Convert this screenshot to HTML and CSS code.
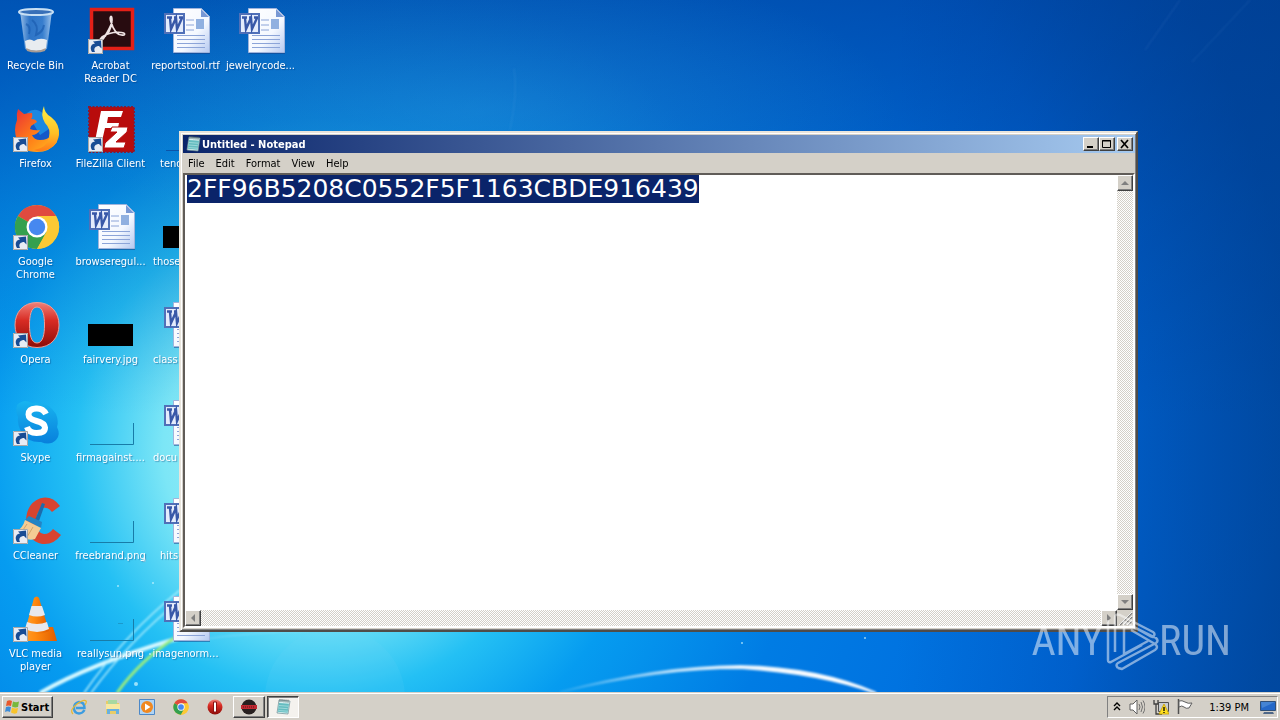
FILE: index.html
```html
<!DOCTYPE html>
<html lang="en">
<head>
<meta charset="utf-8">
<title>Desktop</title>
<link rel="stylesheet" href="styles.css">
</head>
<body>
<svg class="defs" aria-hidden="true">
  <defs>
    <linearGradient id="page" x1="0" y1="0" x2="1" y2="1"><stop offset="0" stop-color="#fff"/><stop offset=".6" stop-color="#f4f8ff"/><stop offset="1" stop-color="#b4c8f0"/></linearGradient>
    <linearGradient id="red" x1="0" y1="0" x2="0" y2="1"><stop offset="0" stop-color="#f08078"/><stop offset=".4" stop-color="#d82c24"/><stop offset="1" stop-color="#8c0c08"/></linearGradient>
    <linearGradient id="fox" x1="0" y1="0" x2="1" y2="1"><stop offset="0" stop-color="#e83038"/><stop offset=".5" stop-color="#ff7a18"/><stop offset="1" stop-color="#ffc020"/></linearGradient>
    <linearGradient id="foxtail" x1="0" y1="0" x2="0" y2="1"><stop offset="0" stop-color="#fff048"/><stop offset=".6" stop-color="#ffc024"/><stop offset="1" stop-color="#ff7a1a"/></linearGradient>
    <linearGradient id="bin" x1="0" y1="0" x2="1" y2="0"><stop offset="0" stop-color="#c4dcf4" stop-opacity=".8"/><stop offset=".3" stop-color="#4c88d0" stop-opacity=".6"/><stop offset=".7" stop-color="#5c98dc" stop-opacity=".6"/><stop offset="1" stop-color="#c8e0f8" stop-opacity=".8"/></linearGradient>
    <linearGradient id="sky" x1="0" y1="0" x2="0" y2="1"><stop offset="0" stop-color="#18b4f0"/><stop offset="1" stop-color="#0880dc"/></linearGradient>
    <linearGradient id="cone" x1="0" y1="0" x2="1" y2="0"><stop offset="0" stop-color="#ffa030"/><stop offset=".4" stop-color="#ff8a10"/><stop offset="1" stop-color="#e05c00"/></linearGradient>
    <symbol id="arrow" viewBox="0 0 15 15"><path d="M0 0h15v15H0z" fill="#e8ecf4"/><path d="M.5.5h14v14H.5z" fill="none" stroke="#a8a8a8"/><path d="M4 13C1 8 4 4.500 7 4.500L5 2.500l8-1 .5 8-2.500-2.500C8 7 5 9 7 13z" fill="#184c94"/></symbol>
    <symbol id="word" viewBox="0 0 48 48"><path d="M12 4h29l8 8v36H12z" fill="#183c80" opacity=".5"/><path d="M11.500 2.500h28l8 8v36h-36z" fill="url(#page)" stroke="#a0b4dc"/><path d="M39 3v8h8z" fill="#7898d4"/><path d="M24 14h8M24 19h8M24 24h8M15 29.500h28M15 33.500h28M15 37.500h28M15 41.500h28" stroke="#8ca4d8"/><path d="M34 13h8v10h-8z" fill="#90b0e0"/><path d="M3 8h19v19H3z" fill="#e4ecfc" stroke="#5070b8" stroke-width="2"/><path d="M5 11.500h5M12 11.500h3M17 11.500h4M8 12l1 11 5-11 1 11 5-11" fill="none" stroke="#3858a8" stroke-width="2.400"/></symbol>
    <symbol id="blank" viewBox="0 0 48 48"><path d="M3 46.500h43.500V25" fill="none" stroke="#187ca8" stroke-width="1"/></symbol>
    <symbol id="black" viewBox="0 0 48 48"><path d="M1 24h45v22H1z"/></symbol>
    <symbol id="chrome" viewBox="0 0 48 48"><circle cx="25" cy="25" r="22" fill="#fcc934"/><path d="M25 25L5.900 14A22 22 0 0 1 44.100 14z" fill="#e04a3f"/><path d="M25 25L5.900 14A22 22 0 0 0 25 47l9.500-17z" fill="#34a04f"/><path d="M25 14h19.100A22 22 0 0 1 25 47l9.500-17z" fill="#fcc934"/><circle cx="25" cy="25" r="10.500" fill="#fff"/><circle cx="25" cy="25" r="8.200" fill="#4688f0"/></symbol>
    <symbol id="opera" viewBox="0 0 48 48"><path fill-rule="evenodd" d="M25 2.500c14 0 22 10 22 22.500S39 47.500 25 47.500 3 37.500 3 25 11 2.500 25 2.500zM25 7c-6 0-7.500 9-7.500 18S19 43 25 43s7.500-9 7.500-18S31 7 25 7z" fill="url(#red)" stroke="#f09c94" stroke-width="1"/></symbol>
    <symbol id="notepad" viewBox="0 0 16 16"><path d="M4 1l11 1-2 13-11-1z" fill="#d8f0f0" stroke="#6c8c94" stroke-width=".7"/><path d="M4 4l10 .7-1.500 9-9.700-.9z" fill="#64bcc0"/><path d="M4 6.500l9 .7M3.700 9l9 .7M3.400 11.500l9 .7" stroke="#b4e4e4" stroke-width=".7"/><path d="M5 0v3M7 0v3M9 .3v3M11 .5v3M13 .7v3" stroke="#546468" stroke-width=".8"/></symbol>
  </defs>
</svg>

<main class="desktop">
  <svg class="wallpaper" viewBox="0 0 1280 692" preserveAspectRatio="none" aria-hidden="true">
    <defs>
      <radialGradient id="glow" gradientUnits="userSpaceOnUse" cx="320" cy="450" r="980"><stop offset="0" stop-color="#c0f8fc"/><stop offset=".16" stop-color="#7ce6f6"/><stop offset=".25" stop-color="#24c0f4"/><stop offset=".34" stop-color="#069cf0"/><stop offset=".5" stop-color="#007ce4"/><stop offset=".8" stop-color="#0068dc"/><stop offset="1" stop-color="#0052b4"/></radialGradient>
      <linearGradient id="shade" x1="0" y1="0" x2="0" y2="1"><stop offset="0" stop-color="#00409c" stop-opacity=".65"/><stop offset=".3" stop-color="#00409c" stop-opacity=".25"/><stop offset=".6" stop-color="#00409c" stop-opacity="0"/></linearGradient>
      <linearGradient id="edge" x1="0" y1="0" x2="1" y2="0"><stop offset=".7" stop-color="#003880" stop-opacity="0"/><stop offset="1" stop-color="#003880" stop-opacity=".4"/></linearGradient>
      <radialGradient id="haze"><stop offset="0" stop-color="#40b0f0" stop-opacity=".25"/><stop offset="1" stop-color="#40b0f0" stop-opacity="0"/></radialGradient>
      <linearGradient id="beam" x1="0" y1="0" x2="1" y2="0"><stop offset="0" stop-color="#fff" stop-opacity=".1"/><stop offset=".65" stop-color="#fff" stop-opacity=".9"/><stop offset="1" stop-color="#fff"/></linearGradient>
      <filter id="soft" x="-10%" y="-10%" width="120%" height="120%"><feGaussianBlur stdDeviation="1"/></filter>
    </defs>
    <path d="M0 0h1280v692H0z" fill="url(#glow)"/>
    <path d="M0 0h1280v692H0z" fill="url(#shade)"/>
    <path d="M0 0h1280v692H0z" fill="url(#edge)"/>
    <ellipse cx="480" cy="110" rx="420" ry="150" fill="url(#haze)"/>
    <circle cx="335" cy="698" r="70" fill="#70d4f8" opacity=".12"/>
    <g fill="none" filter="url(#soft)">
      <path d="M40 693Q90 664 179 638" stroke="#d4f8ff" stroke-width="4"/>
      <path d="M84 693Q124 635 180 590M91 693Q130 640 180 600" stroke="#b4f0fc" stroke-width="1.500"/>
      <path d="M117 693Q140 660 179 635" stroke="#98ec80" stroke-width="3"/>
      <path d="M198 640Q250 632 310 631" stroke="#b4ecfc" opacity=".4"/>
      <path d="M560 692Q660 666 740 666Q820 668 876 693Q820 673 740 668Q660 668 560 692z" fill="url(#beam)" stroke="url(#beam)" stroke-width="2"/>
      <path d="M1192 62L1250 0M1145 50L1180 0" stroke="#68a8e0" opacity=".2"/>
      <path d="M514 68Q518 92 510 130" stroke="#68b4ec" opacity=".2"/>
    </g>
    <g fill="#d4f8ff" opacity=".7"><circle cx="118" cy="586" r="1"/><circle cx="144" cy="560" r="2"/><circle cx="153" cy="583" r="1"/><circle cx="136" cy="684" r="2"/><circle cx="865" cy="638" r="1"/><circle cx="742" cy="643" r="1"/><circle cx="150" cy="654" r="1"/></g>
  </svg>

  <div class="icons">
    <a class="item" href="#"><svg class="pic" viewBox="0 0 48 48"><path d="M8 5l5 38q10 5 22 0l5-38z" fill="url(#bin)"/><path d="M13 35q5-3 9 0 6-4 13-1l-1 9q-9 4-20 0z" fill="#e8ecf0"/><path d="M14 42q10 5 20 0l-1 3q-9 3-18 0z" fill="#a89c94"/><ellipse cx="24" cy="6" rx="17" ry="3" fill="#3870b8" stroke="#c8e0f4" stroke-width="2"/><path d="M14 18q5 2 3 10M20 14q7 5 4 15 7-3 8-10" fill="none" stroke="#1858ac" stroke-width="2" opacity=".6"/></svg><span class="name">Recycle Bin</span></a>
    <a class="item" href="#"><svg class="pic" viewBox="0 0 48 48"><path d="M4.500 3.500h41v39h-41z" fill="#280c10" stroke="#e42018" stroke-width="3.500"/><path d="M13 34q12-7 12-20c0-6-3-4-1 2 3 10 8 14 13 13 4-3-12-5-22 2-5 5-1 6 3-1q5-8 7-14" fill="none" stroke="#f0e4e4" stroke-width="1.700"/><use href="#arrow" x="1" y="33" width="15" height="15"/></svg><span class="name">Acrobat Reader DC</span></a>
    <a class="item" href="#"><svg class="pic" viewBox="0 0 48 48"><use href="#word"/></svg><span class="name">reportstool.rtf</span></a>
    <a class="item" href="#"><svg class="pic" viewBox="0 0 48 48"><use href="#word"/></svg><span class="name">jewelrycode...</span></a>

    <a class="item" href="#"><svg class="pic" viewBox="0 0 48 48"><circle cx="25" cy="23" r="17" fill="#1458c8"/><path d="M15 9q8-7 17 1 2 8 5 15l-9 6z" fill="#1c88e0"/><path d="M6 5l6 5q4-1 8-1 1 4-1 6 5 0 6 3l-6 4-1 3q5 2 10 1-3 5-8 5 2 5 8 5 8 0 12-5 5 2 5 7-7 10-20 10Q9 48 5 36 1 26 5 16 4 10 6 5z" fill="url(#fox)"/><path d="M32 2q0 7 7 11 9 7 8 18-2 13-16 16-5 1-9-1 13-2 15-13 2-8-4-14-5-8-1-17z" fill="url(#foxtail)"/><use href="#arrow" x="1" y="33" width="15" height="15"/></svg><span class="name">Firefox</span></a>
    <a class="item" href="#"><svg class="pic" viewBox="0 0 48 48"><path d="M2 3h45v45H2z" fill="#b80c0c" stroke="#8c1830" stroke-width="2" stroke-dasharray="2 1.500"/><path d="M14 7h22l-2 6H21l-1 6h12l-1 5H18l-3 13H8z" fill="#fff"/><path d="M25 23h16l-1 5-11 10h10l-2 6H17l1-5 12-11h-7z" fill="#fff" stroke="#b80c0c" stroke-width="1"/><use href="#arrow" x="1" y="33" width="15" height="15"/></svg><span class="name">FileZilla Client</span></a>
    <a class="item" href="#"><svg class="pic" viewBox="0 0 48 48"><path d="M4 46.500h42" stroke="#0c54a8"/></svg><span class="name cut">tend</span></a>
    <span></span>

    <a class="item" href="#"><svg class="pic" viewBox="0 0 48 48"><use href="#chrome"/><use href="#arrow" x="1" y="33" width="15" height="15"/></svg><span class="name">Google Chrome</span></a>
    <a class="item" href="#"><svg class="pic" viewBox="0 0 48 48"><use href="#word"/></svg><span class="name">browseregul...</span></a>
    <a class="item" href="#"><svg class="pic" viewBox="0 0 48 48"><use href="#black"/></svg><span class="name cut wide">those</span></a>
    <span></span>

    <a class="item" href="#"><svg class="pic" viewBox="0 0 48 48"><use href="#opera"/><use href="#arrow" x="1" y="33" width="15" height="15"/></svg><span class="name">Opera</span></a>
    <a class="item" href="#"><svg class="pic" viewBox="0 0 48 48"><use href="#black"/></svg><span class="name">fairvery.jpg</span></a>
    <a class="item" href="#"><svg class="pic" viewBox="0 0 48 48"><use href="#word"/></svg><span class="name cut wide">class</span></a>
    <span></span>

    <a class="item" href="#"><svg class="pic" viewBox="0 0 48 48"><path d="M5 7Q12 0 20 5q16-2 24 11 3 8 1 13 4 8-1 13-6 6-15 2-12 1-19-9-5-8-4-16-3-6-1-12z" fill="url(#sky)"/><path d="M34 16q-3-6-10-5.500-7.500.5-7.500 6 0 4.500 8 6.500t8.500 6.500q0 5.500-8.500 5.500-7.500 0-9.500-6" fill="none" stroke="#fff" stroke-width="6"/><use href="#arrow" x="1" y="33" width="15" height="15"/></svg><span class="name">Skype</span></a>
    <a class="item" href="#"><svg class="pic" viewBox="0 0 48 48"><use href="#blank"/></svg><span class="name">firmagainst....</span></a>
    <a class="item" href="#"><svg class="pic" viewBox="0 0 48 48"><use href="#word"/></svg><span class="name cut wide">docu</span></a>
    <span></span>

    <a class="item" href="#"><svg class="pic" viewBox="0 0 48 48"><path d="M44 13q-6-8-14-6-11 4-11 19 1 15 12 17 8 1 14-7" fill="none" stroke="#d84430" stroke-width="10"/><path d="M30 7l3 1-6 17-4-1z" fill="#1c6cac"/><path d="M17 20l13 6-1 6-16-8z" fill="#2484c4"/><path d="M13 24l16 8-6 11q-8 3-20-6 8-5 10-13z" fill="#f4cc94"/><path d="M15 28l-6 9m12-6l-6 10" stroke="#d4a468"/><use href="#arrow" x="1" y="33" width="15" height="15"/></svg><span class="name">CCleaner</span></a>
    <a class="item" href="#"><svg class="pic" viewBox="0 0 48 48"><use href="#blank"/></svg><span class="name">freebrand.png</span></a>
    <a class="item" href="#"><svg class="pic" viewBox="0 0 48 48"><use href="#word"/></svg><span class="name cut">hits</span></a>
    <span></span>

    <a class="item" href="#"><svg class="pic" viewBox="0 0 48 48"><path d="M13 33h28l4 14H9z" fill="url(#cone)"/><path d="M22 4q3-3 5 0l10 33q-12 6-24 0z" fill="url(#cone)"/><path d="M19.500 12h10.500l3 9q-8 3-16 0zM15 28q10 4 20 0l2 7q-12 6-24 0z" fill="#e8e8ec"/><use href="#arrow" x="1" y="33" width="15" height="15"/></svg><span class="name">VLC media player</span></a>
    <a class="item" href="#"><svg class="pic" viewBox="0 0 48 48"><use href="#blank"/><path d="M31 29.500h5" stroke="#187ca8" opacity=".5"/></svg><span class="name">reallysun.png</span></a>
    <a class="item" href="#"><svg class="pic" viewBox="0 0 48 48"><use href="#word"/></svg><span class="name">imagenorm...</span></a>
    <span></span>
  </div>

  <section class="window" aria-label="Untitled - Notepad">
    <header class="titlebar">
      <svg class="small" viewBox="0 0 16 16"><use href="#notepad"/></svg>
      <h1 class="title">Untitled - Notepad</h1>
      <div class="controls">
        <button class="raised ctl" aria-label="Minimize"><svg viewBox="0 0 12 10"><path d="M2 7h6v2H2z"/></svg></button>
        <button class="raised ctl" aria-label="Maximize"><svg viewBox="0 0 12 10"><path d="M1.500 1.500h8v7h-8z M1 2h9" fill="none" stroke="#000"/></svg></button>
        <button class="raised ctl close" aria-label="Close"><svg viewBox="0 0 12 10"><path d="M2 1l7 8M9 1L2 9" stroke="#000" stroke-width="1.700"/></svg></button>
      </div>
    </header>
    <nav class="menu">
      <button>File</button><button>Edit</button><button>Format</button><button>View</button><button>Help</button>
    </nav>
    <div class="editor">
      <textarea class="text" aria-label="Document text" spellcheck="false" autofocus>2FF96B5208C0552F5F1163CBDE916439</textarea>
      <div class="track vertical">
        <button class="raised step" aria-label="Scroll up"><svg viewBox="0 0 12 12"><path d="M2 8l4-4 4 4z" fill="#808080"/></svg></button>
        <button class="raised step" aria-label="Scroll down"><svg viewBox="0 0 12 12"><path d="M2 4l4 4 4-4z" fill="#808080"/></svg></button>
      </div>
      <div class="track">
        <button class="raised step" aria-label="Scroll left"><svg viewBox="0 0 12 12"><path d="M8 2L4 6l4 4z" fill="#808080"/></svg></button>
        <button class="raised step" aria-label="Scroll right"><svg viewBox="0 0 12 12"><path d="M4 2l4 4-4 4z" fill="#808080"/></svg></button>
      </div>
      <svg class="grip" viewBox="0 0 16 16"><path d="M3 15L15 3M7 15l8-8M11 15l4-4" stroke="#808080" stroke-width="1.500"/><path d="M2 15L15 2M6 15l9-9M10 15l5-5" stroke="#fff" stroke-width=".8"/></svg>
    </div>
  </section>

  <div class="mark">
    <span>ANY</span>
    <svg viewBox="0 0 56 62"><path d="M5 10v40q0 3 3 2l31-17M12 8v34M12 8q0-5 5-3l33 17q3 2 0 5l-3-1-27-15M15 58q-3-3 0-5l38-20q3-2 0-5L21 12M15 58l4 1 33-19q4-3 0-6L28 20M21 12v32l24-13" fill="none" stroke="#fff" stroke-width="2.500" stroke-linejoin="round"/></svg>
    <span>RUN</span>
  </div>
</main>

<footer class="taskbar">
  <button class="raised start"><svg class="small" viewBox="0 0 16 16"><path d="M3 2q2.500-1.500 5 0L7 7Q4.500 6 2 7z" fill="#e8582c"/><path d="M9 2.500q3 1.500 6 0L14 8q-3 1-6-.5z" fill="#78b83c"/><path d="M2 8q2.500-1 5 0l-1 5q-2.500-1.500-5 0z" fill="#3c8cd8"/><path d="M8 8.500q3 1.500 6 .5l-1 5q-3 1.500-6-.5z" fill="#f8c42c"/></svg>Start</button>
  <nav class="quick" aria-label="Quick launch">
    <button aria-label="Internet Explorer"><svg class="small" viewBox="0 0 16 16"><path d="M13.500 11q-2 3.500-5.500 3.500-5-.5-5-5.500T8 3q5.500 0 5.500 6H5" fill="none" stroke="#3c9ce0" stroke-width="2.400"/><path d="M2 15Q-2 11 6 5q7-5 9-3 1 1-1 4" fill="none" stroke="#e8b830" stroke-width="1.200"/></svg></button>
    <button aria-label="Windows Explorer"><svg class="small" viewBox="0 0 16 16"><path d="M1 2h5l1 2h7v11H1z" fill="#e8cc68"/><path d="M3 1h9v6H3z" fill="#a8d8a0"/><path d="M1 5h14v5H1z" fill="#f8e8a0"/><path d="M2 15v-5h12v5h-3v-3H5v3z" fill="#68b0e0"/></svg></button>
    <button aria-label="Media Player"><svg class="small" viewBox="0 0 16 16"><path d="M.5.500h15v15H.5z" fill="#b0d4f4" stroke="#4c88c8"/><circle cx="8" cy="8" r="6" fill="#f08820"/><path d="M6 4.500l5.500 3.500L6 11.500z" fill="#fff"/></svg></button>
    <button aria-label="Chrome"><svg class="small" viewBox="2 2 46 46"><use href="#chrome" width="48" height="48"/></svg></button>
    <button aria-label="Opera"><svg class="small" viewBox="0 0 16 16"><circle cx="8" cy="8" r="7.500" fill="url(#red)"/><path d="M6.500 3h3v10h-3z" fill="#fff" stroke="#8c1010"/></svg></button>
  </nav>
  <button class="raised task" aria-label="Recorder"><svg class="small" viewBox="0 0 16 16"><circle cx="8" cy="8" r="7.500" fill="#282020"/><path d="M0 6h16v4H0z" fill="#c02830"/><path d="M2 8h12" stroke="#581018" stroke-dasharray="1 1"/></svg></button>
  <button class="task pressed" aria-label="Untitled - Notepad"><svg class="small" viewBox="0 0 16 16"><use href="#notepad"/></svg></button>
  <div class="tray">
    <svg class="chevron" viewBox="0 0 8 16"><path d="M1 7l3-3 3 3M1 11l3-3 3 3" fill="none" stroke="#000" stroke-width="1.400"/></svg>
    <svg class="small" viewBox="0 0 16 16"><path d="M1 5h3l4-4v14l-4-4H1z" fill="#fff" stroke="#606060"/><path d="M10 5q2 3 0 6M12 3q3 5 0 10M14 1.500q4 6.500 0 13" fill="none" stroke="#707070"/></svg>
    <svg class="small" viewBox="0 0 16 16"><path d="M5.500 3.500h10v9h-10z" fill="#c8ccd0" stroke="#505050"/><path d="M1 1v4h4V1M3 5v10h6" fill="none" stroke="#404040" stroke-width="1.300"/><path d="M11 5l5 10H6z" fill="#ffe020" stroke="#c49c00" stroke-width=".8"/><path d="M11 8v4M11 13v1" stroke="#000" stroke-width="1.300"/></svg>
    <svg class="small" viewBox="0 0 16 16"><path d="M1.500 0v15" stroke="#505050" stroke-width="1.500"/><path d="M2 2q3-1 6 1t7 1l-3 5q-3 1-5-1t-5 0z" fill="#fff" stroke="#606060"/></svg>
    <time class="clock">1:39 PM</time>
    <svg class="small" viewBox="0 0 16 16"><path d="M.5 2.500h15v9H.5z" fill="#2468c8" stroke="#305078"/><path d="M1 3h14L2 9z" fill="#4484d4"/><path d="M4 13h9l1 2H3z" fill="#506888"/></svg>
  </div>
</footer>
<script>
  const text = document.querySelector('.text');
  text.focus();
  text.select();
</script>
</body>
</html>
```
FILE: styles.css
```css
* { box-sizing: border-box; }
body {
  margin: 0;
  height: 100vh;
  display: flex;
  flex-direction: column;
  overflow: hidden;
  font-family: "DejaVu Sans Condensed", "DejaVu Sans", sans-serif;
  font-stretch: condensed;
  font-size: 11px;
  line-height: 13px;
  color: #000;
}
button {
  font: inherit;
  color: inherit;
  margin: 0;
  padding: 0;
  border: 0;
  background: none;
}
svg { display: block; flex: none; }
.defs { position: absolute; width: 0; height: 0; }
.small { width: 16px; height: 16px; }

.desktop { position: relative; flex: 1; min-height: 0; background: #0078e0; }
.wallpaper { position: absolute; inset: 0; width: 100%; height: 100%; }
.icons {
  position: relative;
  display: grid;
  grid-template-columns: repeat(4, 75px);
  grid-auto-rows: 98px;
  margin-left: -2px;
}
.item {
  display: flex;
  flex-direction: column;
  align-items: center;
  gap: 5px;
  padding-top: 6px;
  color: #fff;
  text-align: center;
  text-decoration: none;
}
.pic { width: 48px; height: 48px; overflow: visible; }
.name { max-width: 74px; text-shadow: 1px 1px 1px rgba(0, 40, 100, .4); }
.cut { align-self: flex-start; padding-left: 12px; }
.wide { padding-left: 5px; }

.raised {
  background: #d4d0c8;
  border: 1px solid;
  border-color: #fff #404040 #404040 #fff;
  box-shadow: inset -1px -1px #808080;
}
.window {
  position: absolute;
  left: 179px;
  top: 131px;
  width: 959px;
  height: 501px;
  display: flex;
  flex-direction: column;
  padding: 2px 1px 2px 2px;
  background: #d4d0c8;
  border: 2px solid;
  border-color: #e8e4dc #504c48 #504c48 #e8e4dc;
  box-shadow: inset 1px 1px #fff, inset -1px -1px #808080;
}
.titlebar {
  display: flex;
  align-items: center;
  gap: 1px;
  height: 18px;
  padding: 0 2px;
  background: linear-gradient(90deg, #0a246a, #a6caf0);
  color: #fff;
}
.title { margin: 0; font-size: 11px; font-weight: 700; }
.controls { display: flex; margin-left: auto; }
.ctl { width: 16px; height: 14px; padding: 1px; }
.ctl svg { width: 12px; height: 10px; }
.close { margin-left: 2px; }
.menu { display: flex; gap: 1px; height: 20px; align-items: center; }
.menu button { padding: 0 5px; }
.editor {
  flex: 1;
  min-height: 0;
  display: grid;
  grid-template-columns: 1fr 16px;
  grid-template-rows: 1fr 16px;
  border: 2px solid;
  border-color: #605c58 #fff #fff #605c58;
}
.text {
  width: 100%;
  height: 100%;
  margin: 0;
  padding: 0 2px;
  border: 0;
  outline: 0;
  resize: none;
  overflow: hidden;
  background: #fff;
  color: #000;
  font: 25px/27px "DejaVu Sans", sans-serif;
}
.text::selection { background: #0a246a; color: #fff; }
.track {
  display: flex;
  justify-content: space-between;
  background: repeating-conic-gradient(#fff 0 25%, #d4d0c8 0 50%) 0 0 / 2px 2px;
}
.vertical { flex-direction: column; }
.step { width: 16px; height: 16px; padding: 1px; }
.step svg { width: 12px; height: 12px; }
.grip { width: 16px; height: 16px; background: #d4d0c8; }

.mark {
  position: absolute;
  right: 49px;
  bottom: 20px;
  display: flex;
  align-items: center;
  color: #fff;
  opacity: .5;
  font: 42px/44px "Liberation Sans Narrow", "Roboto Condensed", "Open Sans Condensed", "Liberation Sans", sans-serif;
}
.mark svg { width: 56px; height: 62px; }

.taskbar {
  flex: none;
  display: flex;
  align-items: center;
  height: 28px;
  padding: 2px 2px 0;
  background: #d4d0c8;
  box-shadow: inset 0 1px #d4d0c8, inset 0 2px #fff;
}
.start {
  display: flex;
  align-items: center;
  gap: 1px;
  height: 22px;
  padding: 0 3px 0 1px;
  font-weight: 700;
}
.quick { display: flex; gap: 18px; padding: 0 10px 0 18px; }
.task { display: flex; align-items: center; justify-content: center; width: 32px; height: 22px; margin-right: 2px; }
.pressed {
  background: #f4f2ee;
  border: 1px solid;
  border-color: #404040 #fff #fff #404040;
  box-shadow: inset 1px 1px #808080;
}
.tray {
  display: flex;
  align-items: center;
  gap: 8px;
  height: 22px;
  margin-left: auto;
  padding: 0 1px 0 5px;
  border: 1px solid;
  border-color: #808080 #fff #fff #808080;
}
.chevron { width: 8px; height: 16px; }
.clock { padding: 0 3px 0 8px; }
```
